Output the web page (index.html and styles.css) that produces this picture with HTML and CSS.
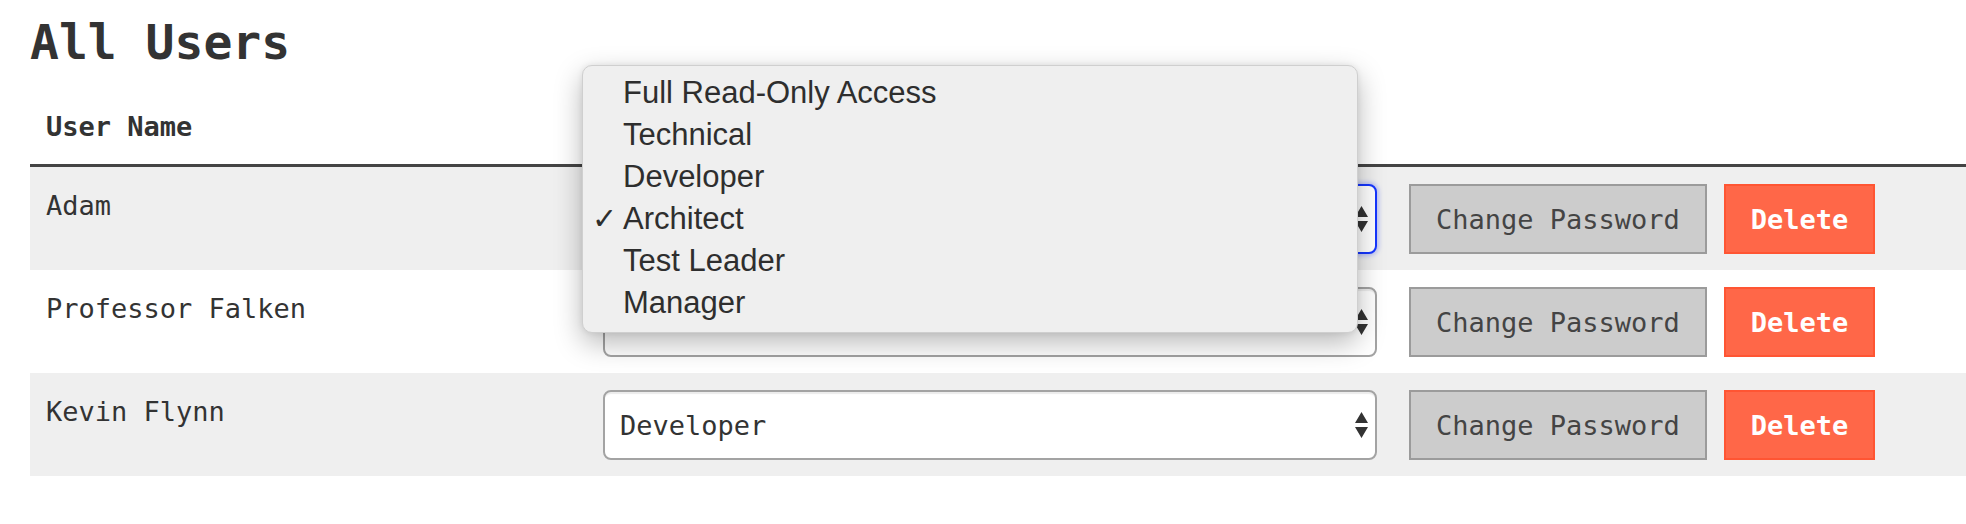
FILE: index.html
```html
<!DOCTYPE html>
<html lang="en">
<head>
<meta charset="utf-8">
<title>All Users</title>
<link rel="stylesheet" href="styles.css">
</head>
<body>
<h1 class="title">All Users</h1>
<table class="users">
  <colgroup>
    <col class="col-name">
    <col class="col-role">
    <col class="col-actions">
  </colgroup>
  <thead>
    <tr>
      <th>User Name</th>
      <th></th>
      <th></th>
    </tr>
  </thead>
  <tbody>
    <tr class="row-alt">
      <td class="name">Adam</td>
      <td class="role">
        <div class="select-wrap">
          <select class="select focused">
            <option>Full Read-Only Access</option>
            <option>Technical</option>
            <option>Developer</option>
            <option selected>Architect</option>
            <option>Test Leader</option>
            <option>Manager</option>
          </select>
          <svg class="arrows" width="13" height="26" viewBox="0 0 13 26"><path d="M6.5 0 L13 11 L0 11 Z M0 15 L13 15 L6.5 26 Z" fill="#333"/></svg>
        </div>
      </td>
      <td class="actions-cell">
        <div class="actions">
          <button class="btn btn-grey">Change Password</button>
          <button class="btn btn-danger">Delete</button>
        </div>
      </td>
    </tr>
    <tr>
      <td class="name">Professor Falken</td>
      <td class="role">
        <div class="select-wrap">
          <select class="select">
            <option>Full Read-Only Access</option>
            <option selected>Technical</option>
            <option>Developer</option>
            <option>Architect</option>
            <option>Test Leader</option>
            <option>Manager</option>
          </select>
          <svg class="arrows" width="13" height="26" viewBox="0 0 13 26"><path d="M6.5 0 L13 11 L0 11 Z M0 15 L13 15 L6.5 26 Z" fill="#333"/></svg>
        </div>
      </td>
      <td class="actions-cell">
        <div class="actions">
          <button class="btn btn-grey">Change Password</button>
          <button class="btn btn-danger">Delete</button>
        </div>
      </td>
    </tr>
    <tr class="row-alt">
      <td class="name">Kevin Flynn</td>
      <td class="role">
        <div class="select-wrap">
          <select class="select">
            <option>Full Read-Only Access</option>
            <option>Technical</option>
            <option selected>Developer</option>
            <option>Architect</option>
            <option>Test Leader</option>
            <option>Manager</option>
          </select>
          <svg class="arrows" width="13" height="26" viewBox="0 0 13 26"><path d="M6.5 0 L13 11 L0 11 Z M0 15 L13 15 L6.5 26 Z" fill="#333"/></svg>
        </div>
      </td>
      <td class="actions-cell">
        <div class="actions">
          <button class="btn btn-grey">Change Password</button>
          <button class="btn btn-danger">Delete</button>
        </div>
      </td>
    </tr>
  </tbody>
</table>

<div class="menu">
  <div class="menu-item"><span class="check"></span>Full Read-Only Access</div>
  <div class="menu-item"><span class="check"></span>Technical</div>
  <div class="menu-item"><span class="check"></span>Developer</div>
  <div class="menu-item"><span class="check">✓</span>Architect</div>
  <div class="menu-item"><span class="check"></span>Test Leader</div>
  <div class="menu-item"><span class="check"></span>Manager</div>
</div>
</body>
</html>
```

FILE: styles.css
```css
html, body {
  margin: 0;
  padding: 0;
  background: #ffffff;
}

body {
  position: relative;
  padding-left: 30px;
  font-family: "DejaVu Sans Mono", "Liberation Mono", monospace;
  color: #333333;
  overflow: hidden;
}

.title {
  margin: 14px 0 19px 0;
  font-size: 48px;
  font-weight: bold;
  line-height: normal;
  color: #333333;
}

.users {
  width: 100%;
  border-collapse: collapse;
  table-layout: fixed;
  font-size: 27px;
  line-height: 1.6;
}

.col-name { width: 557px; }
.col-role { width: 806px; }

.users th {
  text-align: left;
  font-weight: bold;
  padding: 16px;
  border-bottom: 3px solid #444444;
}

.users td {
  padding: 17px 16px 16px 16px;
  vertical-align: top;
}

.row-alt {
  background: #efefef;
}

.select-wrap {
  position: relative;
}

.select {
  display: block;
  width: 100%;
  height: 70px;
  box-sizing: border-box;
  -webkit-appearance: none;
  appearance: none;
  margin: 0;
  padding: 0 40px 0 15px;
  font-family: "DejaVu Sans Mono", "Liberation Mono", monospace;
  font-size: 27px;
  color: #333333;
  background: #ffffff;
  border: 2px solid #a3a3a3;
  border-radius: 8px;
  box-shadow: inset 0 3px 1px -1px #ececec;
  outline: none;
}

.select.focused {
  border-color: #1536ff;
  box-shadow: 0 0 4px 2px rgba(90, 110, 255, 0.35);
}

.arrows {
  position: absolute;
  right: 9px;
  top: 22px;
  pointer-events: none;
}

.actions {
  display: flex;
  gap: 17px;
}

.btn {
  height: 70px;
  box-sizing: border-box;
  margin: 0;
  padding: 0 25px;
  font-family: "DejaVu Sans Mono", "Liberation Mono", monospace;
  font-size: 27px;
  line-height: 1;
  border-radius: 0;
  cursor: pointer;
}

.btn-grey {
  background: #cccccc;
  border: 2px solid #9b9b9b;
  color: #444444;
}

.btn-danger {
  background: #ff6748;
  border: 2px solid #ff5533;
  color: #ffffff;
  font-weight: bold;
}

.menu {
  position: absolute;
  left: 582px;
  top: 65px;
  width: 776px;
  height: 268px;
  box-sizing: border-box;
  padding: 6px 0 10px 0;
  background: #efefef;
  border: 1px solid #cfcfcf;
  border-radius: 10px;
  box-shadow: 0 10px 28px rgba(0, 0, 0, 0.28), 0 0 6px rgba(0, 0, 0, 0.08);
  font-family: "Liberation Sans", Arial, sans-serif;
  font-size: 31px;
  color: #2e2e2e;
}

.menu-item {
  display: flex;
  align-items: baseline;
  height: 42px;
  line-height: 42px;
}

.check {
  display: inline-block;
  width: 31px;
  margin-left: 9px;
  font-family: "DejaVu Sans", sans-serif;
  font-size: 30px;
  font-weight: bold;
}
```
